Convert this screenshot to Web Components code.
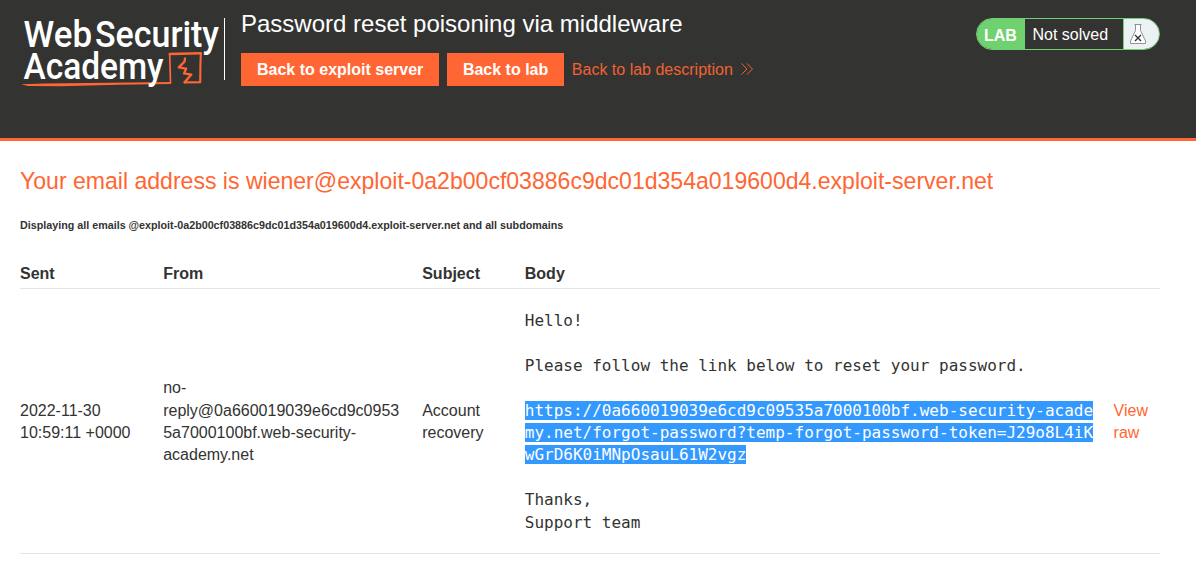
<!DOCTYPE html>
<html lang="en">
<head>
<meta charset="utf-8">
<title>Exploit server: Email client</title>
<style>
  html, body { margin: 0; background: #fff; }
  body { font: 16px/22.4px "Liberation Sans", Arial, sans-serif; color: #333332; overflow: hidden; }
</style>
</head>
<body>
<academy-header>
  <academy-logo slot="logo"></academy-logo>
  <span slot="title">Password reset poisoning via middleware</span>
  <action-button slot="actions">Back to exploit server</action-button>
  <action-button slot="actions">Back to lab</action-button>
  <back-link slot="actions">Back to lab description</back-link>
  <lab-status slot="status">Not solved</lab-status>
</academy-header>
<email-client>
  <span slot="heading">Your email address is wiener@exploit-0a2b00cf03886c9dc01d354a019600d4.exploit-server.net</span>
  <span slot="note">Displaying all emails @exploit-0a2b00cf03886c9dc01d354a019600d4.exploit-server.net and all subdomains</span>
  <email-row head>
    <span slot="sent">Sent</span><span slot="from">From</span><span slot="subject">Subject</span><span slot="body">Body</span>
  </email-row>
  <email-row>
    <span slot="sent">2022-11-30 10:59:11 +0000</span>
    <span slot="from">no-<br>reply@0a660019039e6cd9c09535a7000100bf.web-security-academy.net</span>
    <span slot="subject">Account recovery</span>
    <email-body slot="body"></email-body>
    <span slot="view">View raw</span>
  </email-row>
</email-client>

<script>
const define = (name, html) => {
  const template = document.createElement('template');
  template.innerHTML = html;
  customElements.define(name, class extends HTMLElement {
    constructor() {
      super();
      this.attachShadow({ mode: 'open' }).append(template.content.cloneNode(true));
    }
  });
};

define('academy-header', `
<style>
  :host { display: flex; box-sizing: border-box; height: 141px; padding: 8px 36px 0 20px; background: #333332; border-bottom: 3px solid #ff6633; }
  .logo { flex: none; width: 204px; height: 62px; margin-top: 10px; border-right: 1px solid #fff; }
  .main { flex: 1; margin-left: 16px; }
  .title { font-size: 24px; line-height: 32px; color: #fff; white-space: nowrap; }
  .actions { display: flex; align-items: center; gap: 7.6px; margin-top: 13px; }
  .status { margin-top: 10px; }
</style>
<div class="logo"><slot name="logo"></slot></div>
<div class="main">
  <div class="title"><slot name="title"></slot></div>
  <div class="actions"><slot name="actions"></slot></div>
</div>
<div class="status"><slot name="status"></slot></div>`);

define('academy-logo', `
<style>
  :host { display: block; width: 204px; height: 72px; }
  svg { display: block; overflow: visible; }
  text { font-family: Roboto, sans-serif; font-weight: 500; font-size: 37.5px; fill: #fff; }
</style>
<svg width="204" height="72" viewBox="20 18 204 72">
  <g fill="none" stroke="#ff6633" stroke-linejoin="round" stroke-linecap="round">
    <path d="M170.5 83 L169.7 54.4" stroke-width="1.7"/>
    <path d="M169.7 54 L200.8 53.3" stroke-width="2.4"/>
    <path d="M200.8 53.5 L200.4 65 L200.2 82.2 L184.5 82.4" stroke-width="2.1"/>
    <path d="M185 58.3 L184.5 61.6 L178.8 67.4 L186.2 68.6 L184 73.4 L191.4 74.6 L184.6 82.2" stroke-width="2.3"/>
  </g>
  <path fill="#ff6633" d="M21 84.3 L45 83.5 L171 82.1 L170.8 84 L120 84.8 L60 86.2 L28 86Z"/>
  <text x="23.5" y="46.6" textLength="68.5" lengthAdjust="spacingAndGlyphs">Web</text>
  <text x="95" y="46.6" textLength="124" lengthAdjust="spacingAndGlyphs">Security</text>
  <text x="23.5" y="79" textLength="140" lengthAdjust="spacingAndGlyphs">Academy</text>
</svg>`);

define('action-button', `
<style>
  :host { display: block; height: 33px; padding: 0 16px; background: #ff6633; color: #fff; font-weight: 700; line-height: 33px; white-space: nowrap; }
</style><slot></slot>`);

define('back-link', `
<style>
  :host { display: flex; align-items: center; gap: 8.3px; color: #ff6633; line-height: 33px; white-space: nowrap; opacity: .93; }
  svg { display: block; margin-bottom: 1px; }
</style><slot></slot>
<svg width="12" height="12" fill="none" stroke="#ff6633" stroke-width="1"><path d="M.5.5 6 6 .5 11.5M6 .5 11.5 6 6 11.5"/></svg>`);

define('lab-status', `
<style>
  :host { display: flex; box-sizing: border-box; width: 184px; height: 32px; border: 1px solid #6fd16f; border-radius: 16px; overflow: hidden; color: #fff; line-height: 30px; background: #333332; }
  b { width: 48px; box-sizing: border-box; padding: 1px 0 0 7px; background: #6fd16f; line-height: 31px; }
  span { flex: 1; padding-left: 7.5px; line-height: 31px; white-space: nowrap; }
  i { display: block; width: 36px; background: #ecf1f4; border-left: 1px solid #6fd16f; margin-right: -1px; }
  svg { display: block; }
</style>
<b>LAB</b><span><slot></slot></span>
<i><svg width="36" height="30" fill="none">
  <path fill="#fff" stroke="#8f9294" d="M10.5 5.5h7M11.5 5.5v6L6.5 22v2.5h15V22l-5-10.5v-6"/>
  <path stroke="#333" stroke-width="1.4" d="m11 16 6 6m0-6-6 6"/>
</svg></i>`);

define('email-client', `
<style>
  :host { display: block; padding: 24px 36px 0 20px; }
  h1 { margin: 0; font-weight: 400; font-size: 23.05px; line-height: 32px; color: #ff6633; white-space: nowrap; }
  h5 { margin: 20px 0 0; font-size: 10.74px; line-height: 16px; white-space: nowrap; }
  .rows { margin-top: 25px; }
</style>
<h1><slot name="heading"></slot></h1>
<h5><slot name="note"></slot></h5>
<div class="rows"><slot></slot></div>`);

define('email-row', `
<style>
  :host { display: grid; grid-template-columns: 143.2px 259px 102.6px 588.8px 46.4px; align-items: center; box-sizing: border-box; height: 265px; border-bottom: 1px solid #e5e5e5; padding-top: 2px; }
  :host([head]) { height: 31px; font-weight: 700; align-items: start; padding-top: 5px; }
  div { padding-right: 20px; }
  .from { overflow-wrap: anywhere; }
  .view { color: #ff6633; padding-right: 0; }
</style>
<div><slot name="sent"></slot></div>
<div class="from"><slot name="from"></slot></div>
<div><slot name="subject"></slot></div>
<div class="body"><slot name="body"></slot></div>
<div class="view"><slot name="view"></slot></div>`);

define('email-body', `
<style>
  :host { display: block; }
  pre { margin: 0; font: 16px/22.4px "DejaVu Sans Mono", monospace; white-space: pre; }
  mark { background: #3399ff; color: #fff; }
</style>
<pre>Hello!

Please follow the link below to reset your password.

<mark>https://0a660019039e6cd9c09535a7000100bf.web-security-acade<br>my.net/forgot-password?temp-forgot-password-token=J29o8L4iK<br>wGrD6K0iMNpOsauL61W2vgz</mark>

Thanks,
Support team</pre>`);
</script>
</body>
</html>
